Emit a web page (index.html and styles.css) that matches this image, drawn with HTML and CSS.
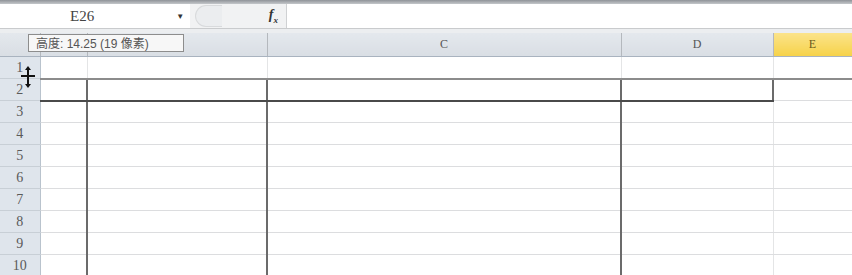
FILE: index.html
```html
<!DOCTYPE html>
<html lang="zh">
<head>
    <meta charset="UTF-8">
    <title>Sheet</title>
    <link rel="stylesheet" href="styles.css">
</head>
<body>
    <div class="window">
        <div class="topline"></div>
        <div class="formula-bar">
            <div class="name-box">
                <span class="cell-ref">E26</span>
                <span class="drop">&#9660;</span>
            </div>
            <div class="fx-zone">
                <span class="pill"></span>
                <span class="fx">f<sub>x</sub></span>
            </div>
            <div class="formula-input"></div>
        </div>
        <div class="spacer"></div>

        <table class="sheet">
            <colgroup>
                <col class="c-head"><col class="c-a"><col class="c-b"><col class="c-c"><col class="c-d"><col class="c-e">
            </colgroup>
            <thead>
                <tr>
                    <th class="corner"></th>
                    <th></th>
                    <th></th>
                    <th>C</th>
                    <th>D</th>
                    <th class="active">E</th>
                </tr>
            </thead>
            <tbody>
                <tr><th>1</th><td></td><td></td><td></td><td></td><td></td></tr>
                <tr class="boxed"><th>2</th><td></td><td class="bl"></td><td class="bl"></td><td class="bl br"></td><td></td></tr>
                <tr><th>3</th><td></td><td class="bl"></td><td class="bl"></td><td class="bl"></td><td></td></tr>
                <tr><th>4</th><td></td><td class="bl"></td><td class="bl"></td><td class="bl"></td><td></td></tr>
                <tr><th>5</th><td></td><td class="bl"></td><td class="bl"></td><td class="bl"></td><td></td></tr>
                <tr><th>6</th><td></td><td class="bl"></td><td class="bl"></td><td class="bl"></td><td></td></tr>
                <tr><th>7</th><td></td><td class="bl"></td><td class="bl"></td><td class="bl"></td><td></td></tr>
                <tr><th>8</th><td></td><td class="bl"></td><td class="bl"></td><td class="bl"></td><td></td></tr>
                <tr><th>9</th><td></td><td class="bl"></td><td class="bl"></td><td class="bl"></td><td></td></tr>
                <tr><th>10</th><td></td><td class="bl"></td><td class="bl"></td><td class="bl"></td><td></td></tr>
            </tbody>
        </table>

        <div class="tooltip">高度: 14.25 (19 像素)</div>

        <svg class="cursor" width="18" height="26" viewBox="0 0 18 26">
            <path d="M9 2 L12 6 L10 6 L10 20 L12 20 L9 24 L6 20 L8 20 L8 6 L6 6 Z" fill="#111"/>
            <rect x="2" y="11" width="14" height="2" fill="#111"/>
        </svg>
    </div>
</body>
</html>
```

FILE: styles.css
```css
/* page frame */
body {
    margin: 0;
    background-color: #ffffff;
    font-family: 'Liberation Sans', Arial, sans-serif;
    color: #555;
    overflow: hidden;
}

.window {
    position: relative;
    width: 852px;
    height: 275px;
    overflow: hidden;
}

.topline {
    height: 4px;
    background: linear-gradient(#8f9398, #c4c7ca);
}

/* formula bar */
.formula-bar {
    display: flex;
    height: 24px;
    background-color: #fbfbfb;
    border-bottom: 1px solid #c9cbcd;
}

.name-box {
    width: 190px;
    display: flex;
    align-items: center;
    background-color: #fff;
    box-sizing: border-box;
}

.cell-ref {
    margin-left: 70px;
    font-size: 15px;
    color: #444;
    font-family: 'Liberation Serif', serif;
}

.drop {
    margin-left: 82px;
    font-size: 8px;
    color: #333;
}

.fx-zone {
    width: 97px;
    display: flex;
    align-items: center;
    background-color: #f1f2f3;
    box-sizing: border-box;
    border-right: 1px solid #cfd1d3;
}

.pill {
    width: 26px;
    height: 20px;
    margin-left: 5px;
    border: 1px solid #d8dadc;
    border-right: none;
    border-radius: 12px 0 0 12px;
    background-color: #ebedef;
}

.fx {
    margin-left: auto;
    margin-right: 8px;
    font-family: 'Liberation Serif', serif;
    font-style: italic;
    font-weight: bold;
    font-size: 14px;
    color: #333;
}

.fx sub {
    font-size: 9px;
}

.formula-input {
    flex: 1;
    background-color: #fff;
}

.spacer {
    height: 4px;
    background-color: #eceef0;
}

/* grid */
.sheet {
    border-collapse: collapse;
    table-layout: fixed;
    width: 852px;
}

.c-head { width: 40px; }
.c-a { width: 47px; }
.c-b { width: 180px; }
.c-c { width: 354px; }
.c-d { width: 152px; }
.c-e { width: 79px; }

thead th {
    height: 23px;
    padding: 0;
    background: linear-gradient(#e4e8ed, #d9dee4);
    border-right: 1px solid #b4b8bd;
    border-bottom: 1px solid #a9b3bf;
    font-weight: normal;
    font-size: 12px;
    color: #555;
    font-family: 'Liberation Serif', serif;
}

thead th.active {
    background: linear-gradient(#fbe38a, #f6d24a);
    color: #6a5a20;
}

tbody th {
    height: 21px;
    padding: 0;
    background-color: #dfe5ec;
    border-right: 1px solid #b9c3cd;
    border-bottom: 1px solid #c8cfd6;
    font-weight: normal;
    font-size: 14px;
    color: #5a5a5a;
    font-family: 'Liberation Serif', serif;
}

td {
    padding: 0;
    border-bottom: 1px solid #dcdddf;
    border-right: 1px solid #e4e5e6;
}

tr.boxed td {
    border-bottom: 2px solid #4a4a4a;
}

tr.boxed td:last-child {
    border-bottom: 1px solid #dcdddf;
}

tbody tr:first-child td {
    border-bottom: 2px solid #8c8c8c;
}

td.bl {
    border-left: 2px solid #6b6b6b;
}

td.br {
    border-right: 2px solid #6b6b6b;
}

/* overlays */
.tooltip {
    position: absolute;
    left: 28px;
    top: 34px;
    width: 156px;
    height: 18px;
    line-height: 18px;
    padding-left: 7px;
    box-sizing: border-box;
    background-color: #f7f7f7;
    border: 1px solid #8d8d8d;
    font-size: 12px;
    color: #555;
    font-family: 'Liberation Sans', 'Noto Sans CJK SC', sans-serif;
    white-space: nowrap;
}

.cursor {
    position: absolute;
    left: 19px;
    top: 64px;
}
```
